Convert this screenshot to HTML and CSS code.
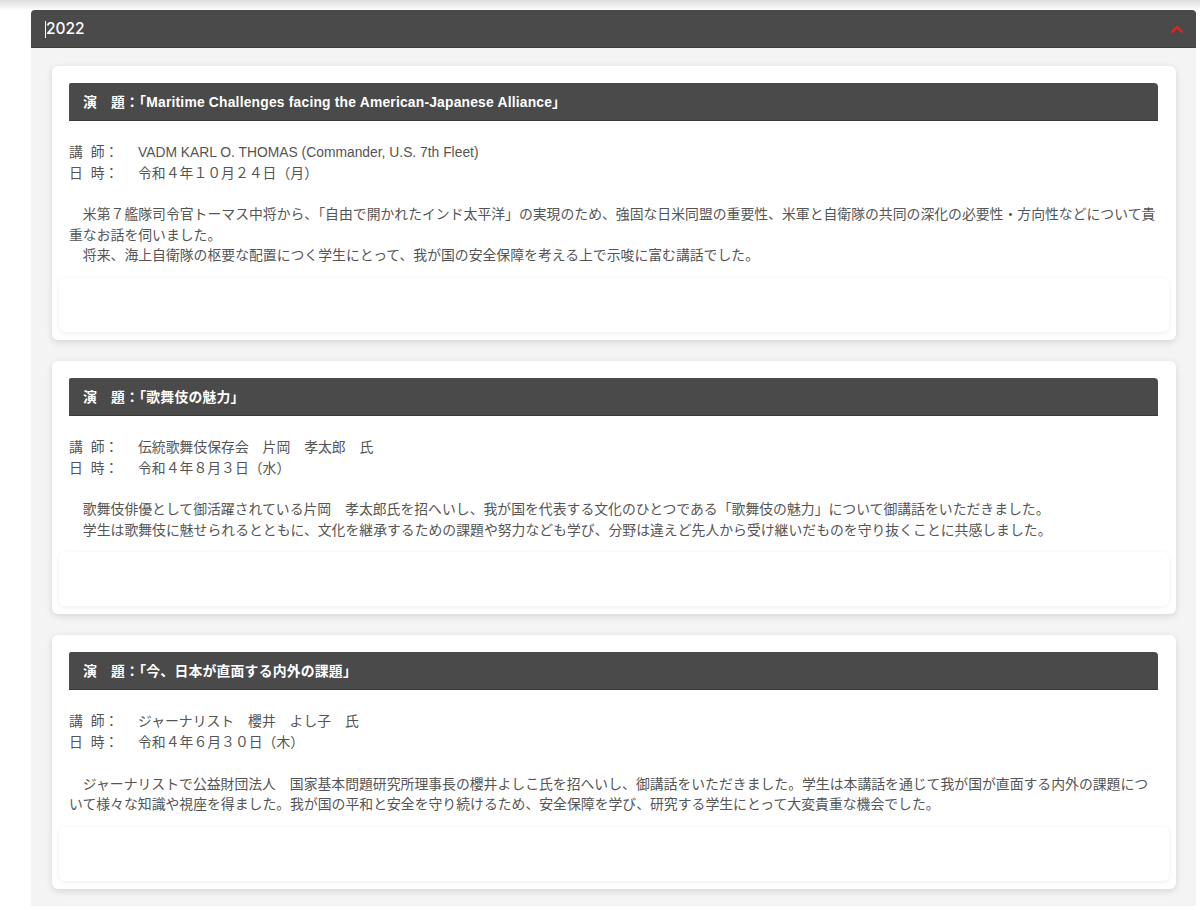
FILE: index.html
```html
<!DOCTYPE html>
<html lang="ja">
<head>
<meta charset="utf-8">
<title>2022</title>
<link rel="stylesheet" href="styles.css">
</head>
<body>
<div class="topshade"></div>
<section class="acc">
  <div class="acc-head">
    <span class="acc-title"><span class="caret"></span>2022</span>
    <svg class="chev" width="14" height="9" viewBox="0 0 14 9"><path d="M1.5 7.5 L7 2 L12.5 7.5" fill="none" stroke="#e3261c" stroke-width="2.4"/></svg>
  </div>
  <div class="acc-body">
    <article class="card">
      <h3 class="card-title">演　題：「Maritime Challenges facing the American-Japanese Alliance」</h3>
      <div class="info">
        <div class="row"><span class="lbl">講 師：</span><span>VADM KARL O. THOMAS (Commander, U.S. 7th Fleet)</span></div>
        <div class="row"><span class="lbl">日 時：</span><span>令和４年１０月２４日（月）</span></div>
      </div>
      <p class="desc">　米第７艦隊司令官トーマス中将から、「自由で開かれたインド太平洋」の実現のため、強固な日米同盟の重要性、米軍と自衛隊の共同の深化の必要性・方向性などについて貴重なお話を伺いました。<br>　将来、海上自衛隊の枢要な配置につく学生にとって、我が国の安全保障を考える上で示唆に富む講話でした。</p>
      <div class="media"></div>
    </article>
    <article class="card">
      <h3 class="card-title">演　題：「歌舞伎の魅力」</h3>
      <div class="info">
        <div class="row"><span class="lbl">講 師：</span><span>伝統歌舞伎保存会　片岡　孝太郎　氏</span></div>
        <div class="row"><span class="lbl">日 時：</span><span>令和４年８月３日（水）</span></div>
      </div>
      <p class="desc">　歌舞伎俳優として御活躍されている片岡　孝太郎氏を招へいし、我が国を代表する文化のひとつである「歌舞伎の魅力」について御講話をいただきました。<br>　学生は歌舞伎に魅せられるとともに、文化を継承するための課題や努力なども学び、分野は違えど先人から受け継いだものを守り抜くことに共感しました。</p>
      <div class="media"></div>
    </article>
    <article class="card">
      <h3 class="card-title">演　題：「今、日本が直面する内外の課題」</h3>
      <div class="info">
        <div class="row"><span class="lbl">講 師：</span><span>ジャーナリスト　櫻井　よし子　氏</span></div>
        <div class="row"><span class="lbl">日 時：</span><span>令和４年６月３０日（木）</span></div>
      </div>
      <p class="desc">　ジャーナリストで公益財団法人　国家基本問題研究所理事長の櫻井よしこ氏を招へいし、御講話をいただきました。学生は本講話を通じて我が国が直面する内外の課題について様々な知識や視座を得ました。我が国の平和と安全を守り続けるため、安全保障を学び、研究する学生にとって大変貴重な機会でした。</p>
      <div class="media"></div>
    </article>
  </div>
</section>
</body>
</html>
```

FILE: styles.css
```css
* { box-sizing: border-box; }
html, body {
  margin: 0;
  padding: 0;
  background: #ffffff;
}
body {
  font-family: "Liberation Sans", "Noto Sans CJK JP", sans-serif;
  color: #555555;
  font-size: 13.85px;
  line-height: 20.6px;
}
.topshade {
  height: 10px;
  background: linear-gradient(to bottom, #dedede, #f2f2f2 70%, #ffffff);
}
.acc {
  margin-left: 31px;
  width: 1165px;
}
.acc-head {
  height: 38px;
  background: #4a4a4a;
  border-radius: 4px 4px 0 0;
  display: flex;
  align-items: center;
  justify-content: space-between;
  padding: 2px 12px 0 14px;
  border-bottom: 1px solid #3e3e3e;
}
.acc-title {
  color: #ffffff;
  font-size: 15.5px;
  font-weight: 500;
  font-family: "Inter", "Liberation Sans", sans-serif;
  display: flex;
  align-items: center;
}
.caret {
  display: inline-block;
  width: 1px;
  height: 17px;
  background: #ffffff;
}
.chev { display: block; }
.acc-body {
  background: #f4f4f4;
  padding: 18px 20px 17px 21px;
  display: flex;
  flex-direction: column;
  gap: 21px;
}
.card {
  background: #ffffff;
  border-radius: 6px;
  box-shadow: 0 2px 7px rgba(0, 0, 0, 0.13);
  padding: 17px 18px 8px 17px;
}
.card-title {
  margin: 0;
  height: 38px;
  background: #4a4a4a;
  border-radius: 2px 4px 0 0;
  color: #ffffff;
  font-size: 13.85px;
  font-weight: 700;
  line-height: 38px;
  padding: 0 14px;
  letter-spacing: 0.2px;
  border-bottom: 1px solid #3a3a3a;
}
.info {
  margin-top: 21px;
}
.row {
  display: flex;
}
.lbl {
  width: 69px;
  flex: none;
  word-spacing: 4px;
}
.desc {
  margin: 21px 0 0 0;
}
.media {
  margin: 12px -11px 0 -10px;
  height: 54px;
  background: #ffffff;
  border-radius: 6px;
  box-shadow: 0 1px 5px rgba(0, 0, 0, 0.07);
}
```
